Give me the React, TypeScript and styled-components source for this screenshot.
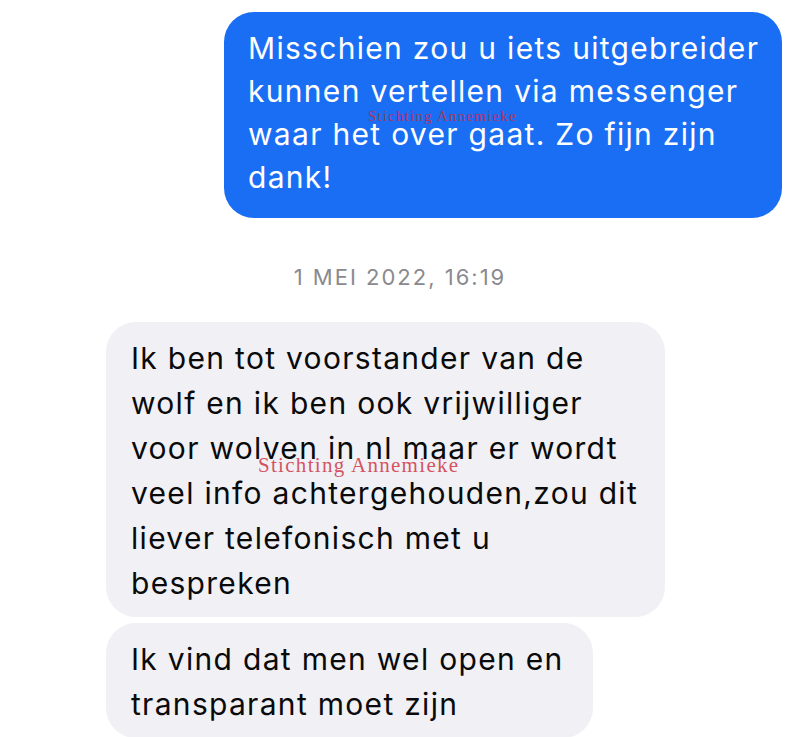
import styled, { createGlobalStyle } from 'styled-components';

const GlobalStyle = createGlobalStyle`
  html, body {
    margin: 0;
    padding: 0;
    background: #ffffff;
  }
  body {
    font-family: 'Inter', 'Liberation Sans', sans-serif;
    -webkit-font-smoothing: antialiased;
  }
`;

const Thread = styled.div`
  width: 800px;
  height: 737px;
  overflow: hidden;
  display: flex;
  flex-direction: column;
  padding-top: 12px;
  box-sizing: border-box;
`;

const Row = styled.div<{ mine?: boolean }>`
  display: flex;
  justify-content: ${(p) => (p.mine ? 'flex-end' : 'flex-start')};
  padding: ${(p) => (p.mine ? '0 18px 0 0' : '0 0 0 106px')};
`;

const Bubble = styled.div<{ mine?: boolean; width: number; top?: number }>`
  position: relative;
  flex-shrink: 0;
  box-sizing: border-box;
  width: ${(p) => p.width}px;
  margin-top: ${(p) => p.top ?? 0}px;
  padding: ${(p) => (p.mine ? '15px 24px 19px' : '14px 25px 11px')};
  border-radius: 30px;
  background: ${(p) => (p.mine ? '#1a6ef4' : '#f0f0f5')};
  color: ${(p) => (p.mine ? '#ffffff' : '#0a0a0a')};
  font-size: 30px;
  line-height: ${(p) => (p.mine ? 43 : 45)}px;
  letter-spacing: 1.3px;
  white-space: nowrap;
`;

const Stamp = styled.div`
  margin: 46px 0 32px;
  text-align: center;
  font-size: 22px;
  line-height: 26px;
  color: #8a8a8e;
  letter-spacing: 2px;
`;

const Watermark = styled.span<{ size: number; x: number; y: number }>`
  position: absolute;
  left: ${(p) => p.x}px;
  top: ${(p) => p.y}px;
  font-family: 'Liberation Serif', serif;
  font-size: ${(p) => p.size}px;
  line-height: 1;
  letter-spacing: ${(p) => (p.size > 18 ? 1.3 : 1.2)}px;
  color: rgba(205, 40, 55, 0.8);
  white-space: nowrap;
  pointer-events: none;
`;

const App = () => {
  return (
    <>
      <GlobalStyle />
      <Thread>
        <Row mine>
          <Bubble mine width={558}>
            Misschien zou u iets uitgebreider
            <br />
            kunnen vertellen via messenger
            <br />
            waar het over gaat. Zo fijn zijn
            <br />
            dank!
            <Watermark size={15} x={144} y={97}>
              Stichting Annemieke
            </Watermark>
          </Bubble>
        </Row>
        <Stamp>1 MEI 2022, 16:19</Stamp>
        <Row>
          <Bubble width={559}>
            Ik ben tot voorstander van de
            <br />
            wolf en ik ben ook vrijwilliger
            <br />
            voor wolven in nl maar er wordt
            <br />
            veel info achtergehouden,zou dit
            <br />
            liever telefonisch met u
            <br />
            bespreken
            <Watermark size={21} x={152} y={133}>
              Stichting Annemieke
            </Watermark>
          </Bubble>
        </Row>
        <Row>
          <Bubble width={487} top={6}>
            Ik vind dat men wel open en
            <br />
            transparant moet zijn
          </Bubble>
        </Row>
      </Thread>
    </>
  );
};

export default App;
